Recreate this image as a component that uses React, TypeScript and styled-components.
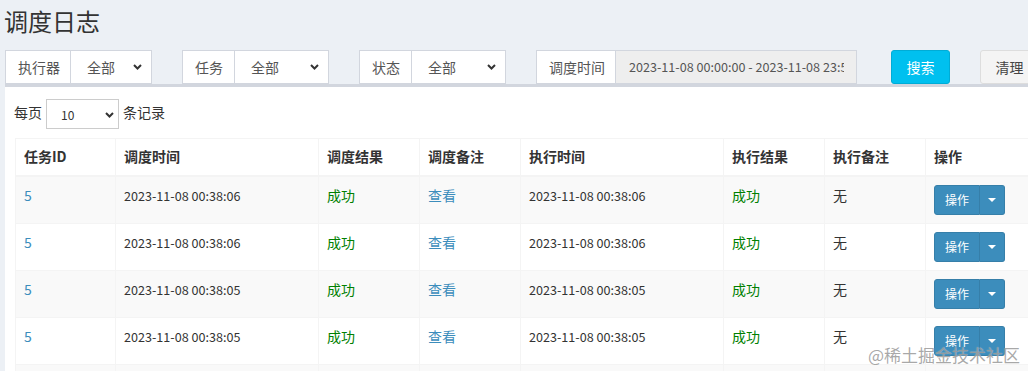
import styled, { createGlobalStyle } from 'styled-components';

const GlobalStyle = createGlobalStyle`
  html, body {
    margin: 0;
    padding: 0;
    background: #ecf0f5;
  }
  body {
    font-family: "Noto Sans CJK SC", "Liberation Sans", sans-serif;
    font-size: 14px;
    line-height: 20px;
    color: #333;
  }
`;

interface FilterDef {
  label: string;
  addon: number;
}

const filters: FilterDef[] = [
  { label: '执行器', addon: 66 },
  { label: '任务', addon: 53 },
  { label: '状态', addon: 53 },
];

interface LogRow {
  jobId: number;
  triggerTime: string;
  handleTime: string;
}

const rows: LogRow[] = [
  { jobId: 5, triggerTime: '2023-11-08 00:38:06', handleTime: '2023-11-08 00:38:06' },
  { jobId: 5, triggerTime: '2023-11-08 00:38:06', handleTime: '2023-11-08 00:38:06' },
  { jobId: 5, triggerTime: '2023-11-08 00:38:05', handleTime: '2023-11-08 00:38:05' },
  { jobId: 5, triggerTime: '2023-11-08 00:38:05', handleTime: '2023-11-08 00:38:05' },
  { jobId: 5, triggerTime: '2023-11-08 00:38:05', handleTime: '2023-11-08 00:38:05' },
];

const columns = ['任务ID', '调度时间', '调度结果', '调度备注', '执行时间', '执行结果', '执行备注', '操作'];
const colWidths = [100, 203, 101, 101, 203, 101, 101, 130];

const Chevron = () => (
  <svg width="9" height="6" viewBox="0 0 9 6">
    <polyline points="1,1 4.5,4.5 8,1" fill="none" stroke="#333" strokeWidth="2" />
  </svg>
);

export default () => {
  return (
    <Page>
      <GlobalStyle />
      <Title>调度日志</Title>
      <FilterRow>
        {filters.map((f) => (
          <InputGroup key={f.label}>
            <Addon width={f.addon}>{f.label}</Addon>
            <FakeSelect>
              <span>全部</span>
              <Chevron />
            </FakeSelect>
          </InputGroup>
        ))}
        <InputGroup width={321}>
          <Addon width={80}>调度时间</Addon>
          <DateInput>
            <DateText>2023-11-08 00:00:00 - 2023-11-08 23:59:59</DateText>
          </DateInput>
        </InputGroup>
        <Button variant="info">搜索</Button>
        <Button variant="default">清理</Button>
      </FilterRow>
      <Box>
        <LengthRow>
          <span>每页</span>
          <LengthSelect>
            <span>10</span>
            <Chevron />
          </LengthSelect>
          <span>条记录</span>
        </LengthRow>
        <Table>
          <colgroup>
            {colWidths.map((w, i) => (
              <col key={i} style={{ width: w }} />
            ))}
          </colgroup>
          <thead>
            <tr>
              {columns.map((c) => (
                <Th key={c}>{c}</Th>
              ))}
            </tr>
          </thead>
          <tbody>
            {rows.map((r, i) => (
              <Tr key={i} striped={i % 2 === 0}>
                <Td><Link>{r.jobId}</Link></Td>
                <Td><Num>{r.triggerTime}</Num></Td>
                <Td><Success>成功</Success></Td>
                <Td><Link>查看</Link></Td>
                <Td><Num>{r.handleTime}</Num></Td>
                <Td><Success>成功</Success></Td>
                <Td>无</Td>
                <Td>
                  <BtnGroup>
                    <OpButton>操作</OpButton>
                    <CaretButton>
                      <Caret />
                    </CaretButton>
                  </BtnGroup>
                </Td>
              </Tr>
            ))}
          </tbody>
        </Table>
      </Box>
      <Watermark>@稀土掘金技术社区</Watermark>
    </Page>
  );
};

const Page = styled.div`
  position: relative;
  width: 1028px;
  height: 371px;
  overflow: hidden;
  background: #ecf0f5;
`;

const Title = styled.h1`
  margin: 0;
  padding: 7px 0 0 4px;
  height: 43px;
  box-sizing: border-box;
  font-size: 24px;
  line-height: 28px;
  font-weight: 400;
  color: #333;
`;

const FilterRow = styled.div`
  display: grid;
  grid-template-columns: 147px 147px 147px 325px 59px 59px;
  column-gap: 30px;
  padding-left: 5px;
  margin-top: 7px;
  height: 34px;
  width: 1100px;
`;

const InputGroup = styled.div<{ width?: number }>`
  display: flex;
  height: 34px;
  width: ${(p) => (p.width ? `${p.width}px` : '100%')};
  box-sizing: border-box;
`;

const Addon = styled.div<{ width: number }>`
  flex: 0 0 ${(p) => p.width}px;
  box-sizing: border-box;
  display: flex;
  align-items: center;
  padding-left: 12px;
  background: #fff;
  border: 1px solid #d2d6de;
  color: #555;
  white-space: nowrap;
`;

const FakeSelect = styled.div`
  flex: 1;
  display: flex;
  align-items: center;
  justify-content: space-between;
  padding: 0 9px 0 16px;
  background: #fff;
  border: 1px solid #d2d6de;
  border-left: 0;
  color: #555;
`;

const DateInput = styled.div`
  flex: 1;
  min-width: 0;
  display: flex;
  align-items: center;
  padding: 0 12px 0 13px;
  background: #eee;
  border: 1px solid #d2d6de;
  border-left: 0;
  color: #555;
`;

const DateText = styled.div`
  white-space: nowrap;
  overflow: hidden;
  font-size: 12.6px;
`;

const Num = styled.span`
  font-size: 12.6px;
`;

const Button = styled.div<{ variant: 'info' | 'default' }>`
  height: 34px;
  box-sizing: border-box;
  display: flex;
  align-items: center;
  justify-content: center;
  border-radius: 3px;
  border: 1px solid ${(p) => (p.variant === 'info' ? '#00acd6' : '#ddd')};
  background: ${(p) => (p.variant === 'info' ? '#00c0ef' : '#f4f4f4')};
  color: ${(p) => (p.variant === 'info' ? '#fff' : '#444')};
`;

const Box = styled.div`
  margin: 0 0 0 5px;
  width: 1100px;
  border-top: 3px solid #d2d6de;
  background: #fff;
  padding: 10px 10px 0 10px;
  height: 300px;
`;

const LengthRow = styled.div`
  display: flex;
  align-items: center;
  gap: 4px;
  height: 30px;
  margin-left: -1px;
  color: #333;
`;

const LengthSelect = styled.div`
  width: 73px;
  height: 30px;
  box-sizing: border-box;
  display: flex;
  align-items: center;
  justify-content: space-between;
  padding: 2px 4px 0 14px;
  border: 1px solid #ccc;
  font-size: 12px;
  color: #333;
  margin-top: 3px;
`;

const Table = styled.table`
  margin-top: 11px;
  border-collapse: collapse;
  table-layout: fixed;
  width: ${colWidths.reduce((a, b) => a + b, 0)}px;
  border: 1px solid #f4f4f4;
`;

const Th = styled.th`
  text-align: left;
  padding: 7px 8px 9px;
  font-weight: 700;
  line-height: 20px;
  border: 1px solid #f4f4f4;
  border-bottom-width: 2px;
  white-space: nowrap;
`;

const Tr = styled.tr<{ striped: boolean }>`
  background: ${(p) => (p.striped ? '#f9f9f9' : '#fff')};
`;

const Td = styled.td`
  height: 30px;
  padding: 8px;
  vertical-align: top;
  line-height: 20px;
  border: 1px solid #f4f4f4;
  white-space: nowrap;
`;

const Link = styled.span`
  color: #3c8dbc;
`;

const Success = styled.span`
  color: green;
`;

const BtnGroup = styled.div`
  display: flex;
  height: 30px;
`;

const OpButton = styled.div`
  box-sizing: border-box;
  height: 30px;
  width: 46px;
  display: flex;
  align-items: center;
  justify-content: center;
  font-size: 12px;
  color: #fff;
  background: #3c8dbc;
  border: 1px solid #367fa9;
  border-radius: 3px 0 0 3px;
`;

const CaretButton = styled.div`
  box-sizing: border-box;
  height: 30px;
  width: 25px;
  display: flex;
  align-items: center;
  justify-content: center;
  background: #3c8dbc;
  border: 1px solid #367fa9;
  border-left: 0;
  border-radius: 0 3px 3px 0;
`;

const Caret = styled.span`
  width: 0;
  height: 0;
  border-left: 4px solid transparent;
  border-right: 4px solid transparent;
  border-top: 4px solid #fff;
`;

const Watermark = styled.div`
  position: absolute;
  right: 8px;
  bottom: 4px;
  font-size: 17px;
  line-height: 24px;
  color: rgba(140, 140, 140, 0.75);
  text-shadow: 0 0 1px rgba(255, 255, 255, 0.6);
  pointer-events: none;
`;
